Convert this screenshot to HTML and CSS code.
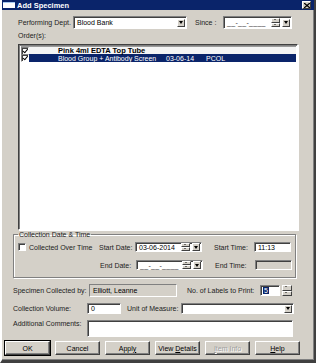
FILE: index.html
```html
<!DOCTYPE html>
<html lang="en">
<head>
  <meta charset="UTF-8" />
  <title>Add Specimen</title>
  <link rel="stylesheet" href="styles.css">
</head>
<body>
  <div class="dialog">
    <div class="titlebar">
      <span class="app-icon"></span>
      <span class="title">Add Specimen</span>
      <span class="close-btn">
        <svg width="6" height="5" viewBox="0 0 6 5"><path d="M0 0 L6 5 M6 0 L0 5" stroke="#000" stroke-width="1.3"/></svg>
      </span>
    </div>

    <div class="content">
      <!-- top row -->
      <div class="row dept-row">
        <span class="lbl dept-lbl">Performing Dept.</span>
        <div class="field combo dept-combo">
          <span class="val">Blood Bank</span>
          <span class="drop-btn"><span class="arrow"></span></span>
        </div>
        <span class="lbl since-lbl">Since :</span>
        <div class="field date-box since-box">
          <span class="mask">__-__-____</span>
          <span class="spin"><span class="up"></span><span class="down"></span></span>
          <span class="drop-btn"><span class="arrow"></span></span>
        </div>
      </div>

      <div class="lbl orders-lbl">Order(s):</div>
      <div class="listbox">
        <div class="list-row group-row">
          <span class="chk checked"></span>
          <span class="col-name">Pink 4ml EDTA Top Tube</span>
        </div>
        <div class="list-row selected">
          <span class="chk checked"></span>
          <span class="col-name">Blood Group + Antibody Screen</span>
          <span class="col-date">03-06-14</span>
          <span class="col-loc">PCOL</span>
        </div>
      </div>

      <fieldset class="group">
        <legend>Collection Date &amp; Time</legend>
        <div class="row grp-row first-row">
          <span class="chk plain"></span>
          <span class="lbl over-lbl">Collected Over Time</span>
          <span class="lbl sd-lbl">Start Date:</span>
          <div class="field date-box small-date">
            <span class="val">03-06-2014</span>
            <span class="spin"><span class="up"></span><span class="down"></span></span>
            <span class="drop-btn"><span class="arrow"></span></span>
          </div>
          <span class="lbl st-lbl">Start Time:</span>
          <div class="field time-box"><span class="val">11:13</span></div>
        </div>
        <div class="row grp-row end-row">
          <span class="lbl sd-lbl end-date-lbl">End Date:</span>
          <div class="field date-box small-date">
            <span class="mask">__-__-____</span>
            <span class="spin"><span class="up"></span><span class="down"></span></span>
            <span class="drop-btn"><span class="arrow"></span></span>
          </div>
          <span class="lbl st-lbl">End Time:</span>
          <div class="field time-box disabled"></div>
        </div>
      </fieldset>

      <div class="row collected-row">
        <span class="lbl form-lbl">Specimen Collected by:</span>
        <div class="field by-box disabled"><span class="val">Elliott, Leanne</span></div>
        <span class="lbl labels-lbl">No. of Labels to Print:</span>
        <div class="field labels-box"><span class="val sel-text">5</span></div>
        <span class="spin big-spin"><span class="up"></span><span class="down"></span></span>
      </div>

      <div class="row volume-row">
        <span class="lbl form-lbl vol-lbl">Collection Volume:</span>
        <div class="field vol-box"><span class="val">0</span></div>
        <span class="lbl unit-lbl">Unit of Measure:</span>
        <div class="field combo unit-combo">
          <span class="val"></span>
          <span class="drop-btn"><span class="arrow"></span></span>
        </div>
      </div>

      <div class="row comments-row">
        <span class="lbl form-lbl vol-lbl">Additional Comments:</span>
        <div class="field comments-box"></div>
      </div>

      <div class="buttons">
        <button class="btn default">OK</button>
        <button class="btn">Cancel</button>
        <button class="btn">Appl<u>y</u></button>
        <button class="btn">View <u>D</u>etails</button>
        <button class="btn" disabled><u>I</u>tem Info</button>
        <button class="btn"><u>H</u>elp</button>
      </div>
    </div>
  </div>
</body>
</html>
```

FILE: styles.css
```css
* {
  box-sizing: border-box;
}

body {
  margin: 0;
  background: #d4d0c8;
  font-family: "Liberation Sans", Arial, sans-serif;
  font-size: 7px;
  color: #000;
}

.dialog {
  width: 316px;
  height: 363px;
  background: #d4d0c8;
  border-left: 2px solid #fff;
  border-right: 2px solid #404040;
  border-bottom: 3px solid #404040;
  box-shadow: inset -1px -1px #808080;
  overflow: hidden;
}

.titlebar {
  height: 10px;
  background: #0a246a;
  color: #fff;
  display: flex;
  align-items: center;
  padding-left: 1px;
}

.app-icon {
  width: 12px;
  height: 6px;
  background: #fff;
  border-top: 1px solid #a6caf0;
}

.title {
  font-weight: bold;
  font-size: 7.5px;
  margin-left: 2px;
}

.close-btn {
  margin-left: auto;
  margin-right: 3px;
  width: 9px;
  height: 8px;
  background: #d4d0c8;
  border: 1px solid;
  border-color: #fff #404040 #404040 #fff;
  display: flex;
  align-items: center;
  justify-content: center;
}

.content {
  padding: 0 0 0 9px;
}

.row {
  display: flex;
  align-items: center;
}

.lbl {
  white-space: nowrap;
  color: #222;
}

/* sunken edit fields */
.field {
  background: #fff;
  border: 1px solid;
  border-color: #808080 #fff #fff #808080;
  box-shadow: inset 1px 1px #404040;
  display: flex;
  align-items: center;
  position: relative;
}

.field .val,
.field .mask {
  padding-left: 3px;
  white-space: nowrap;
}

.field.disabled {
  background: #d4d0c8;
}

.drop-btn {
  width: 8px;
  height: 8px;
  background: #d4d0c8;
  border: 1px solid;
  border-color: #fff #404040 #404040 #fff;
  display: flex;
  align-items: center;
  justify-content: center;
}

.arrow {
  width: 0;
  height: 0;
  border-left: 2.5px solid transparent;
  border-right: 2.5px solid transparent;
  border-top: 3px solid #000;
}

.spin {
  display: flex;
  flex-direction: column;
  width: 9px;
  height: 9px;
}

.spin .up,
.spin .down {
  flex: 1;
  background: #d4d0c8;
  border: 1px solid;
  border-color: #fff #404040 #404040 #fff;
  position: relative;
}

.spin .up::after,
.spin .down::after {
  content: "";
  position: absolute;
  left: 2px;
  top: 0;
  border-left: 1.5px solid transparent;
  border-right: 1.5px solid transparent;
}

.spin .up::after {
  border-bottom: 1.5px solid #000;
}

.spin .down::after {
  border-top: 1.5px solid #000;
}

/* top row */
.dept-row {
  margin-top: 6px;
  height: 13px;
}

.dept-lbl {
  margin-left: 7px;
  width: 55px;
}

.dept-combo {
  width: 114px;
  height: 13px;
}

.dept-combo .drop-btn {
  margin-left: auto;
  margin-right: 1px;
}

.since-lbl {
  margin-left: 8px;
  width: 28px;
}

.since-box {
  width: 69px;
  height: 13px;
}

.date-box .mask {
  color: #333;
  letter-spacing: 0.3px;
}

.date-box .spin {
  margin-left: auto;
  margin-right: 2px;
}

.date-box .drop-btn {
  margin-right: 1px;
}

.orders-lbl {
  margin: 3px 0 0 7px;
  height: 9px;
}

/* list */
.listbox {
  margin: 3px 0 0 7px;
  width: 280px;
  height: 186px;
  background: #fff;
  border: 1px solid;
  border-color: #404040 #fff #fff #404040;
  box-shadow: inset 1px 1px #808080, 1px 1px #fff;
  padding: 1px 1px 0 2px;
}

.list-row {
  height: 8px;
  display: flex;
  align-items: center;
  white-space: nowrap;
}

.group-row {
  background: #f4f4f4;
  border-top: 1px solid #9a9a9a;
  font-weight: bold;
}

.selected {
  background: #0a246a;
  color: #fff;
}

.chk {
  width: 8px;
  height: 8px;
  background: #fff;
  border: 1px solid;
  border-color: #808080 #fff #fff #808080;
  box-shadow: inset 1px 1px #404040;
  position: relative;
  flex: none;
}

.chk.checked::after {
  content: "";
  position: absolute;
  left: 1.5px;
  top: 0;
  width: 2px;
  height: 3.5px;
  border: solid #000;
  border-width: 0 1.2px 1.2px 0;
  transform: rotate(40deg);
}

.col-name {
  margin-left: 29px;
  width: 108px;
}

.group-row .col-name {
  font-size: 7.5px;
}

.col-date {
  width: 40px;
}

/* group box */
.group {
  margin: 1px 0 0 2px;
  width: 283px;
  height: 47px;
  border: 1px solid #808080;
  box-shadow: 1px 1px #fff, inset 1px 1px #fff;
  padding: 0;
}

.group legend {
  padding: 0 1px;
  margin-left: 4px;
  color: #222;
}

.grp-row {
  height: 10px;
}

.first-row {
  margin-top: 4px;
}

.chk.plain {
  margin-left: 4px;
}

.over-lbl {
  margin-left: 3px;
  width: 60px;
}

.sd-lbl {
  margin-left: 10px;
  width: 36px;
}

.end-row {
  margin-top: 8px;
}

.end-date-lbl {
  margin-left: 86px;
}

.small-date {
  width: 67px;
  height: 10px;
}

.small-date .spin {
  height: 8px;
}

.small-date .drop-btn {
  height: 8px;
  width: 8px;
}

.st-lbl {
  margin-left: 12px;
  width: 40px;
}

.time-box {
  width: 37px;
  height: 10px;
}

/* lower form */
.collected-row {
  margin-top: 6px;
  height: 13px;
}

.form-lbl {
  margin-left: 2px;
  width: 76px;
}

.by-box {
  width: 88px;
  height: 13px;
  border-color: #808080 #fff #fff #808080;
  box-shadow: none;
}

.labels-lbl {
  margin-left: 10px;
  width: 73px;
}

.labels-box {
  width: 20px;
  height: 11px;
}

.sel-text {
  background: #0a246a;
  color: #fff;
  margin-left: 2px;
  padding: 0 1px !important;
}

.big-spin {
  margin-left: 2px;
  width: 10px;
  height: 11px;
}

.volume-row {
  margin-top: 6px;
  height: 11px;
}

.vol-lbl {
  width: 74px;
}

.vol-box {
  width: 34px;
  height: 11px;
}

.unit-lbl {
  margin-left: 6px;
  width: 54px;
}

.unit-combo {
  width: 113px;
  height: 11px;
}

.unit-combo .drop-btn {
  margin-left: auto;
  margin-right: 1px;
}

.comments-row {
  margin-top: 6px;
  height: 17px;
  align-items: flex-start;
}

.comments-box {
  width: 206px;
  height: 17px;
}

.buttons {
  display: flex;
  gap: 5px;
  margin: 4px 0 0 -6px;
}

.btn {
  width: 45px;
  height: 14px;
  padding: 0;
  font-family: inherit;
  font-size: 7px;
  background: #d4d0c8;
  border: 1px solid;
  border-color: #fff #404040 #404040 #fff;
  box-shadow: inset -1px -1px #808080;
  color: #000;
}

.btn.default {
  outline: 1px solid #000;
}

.btn:disabled {
  color: #a0a0a0;
  text-shadow: 1px 1px #fff;
}
```
